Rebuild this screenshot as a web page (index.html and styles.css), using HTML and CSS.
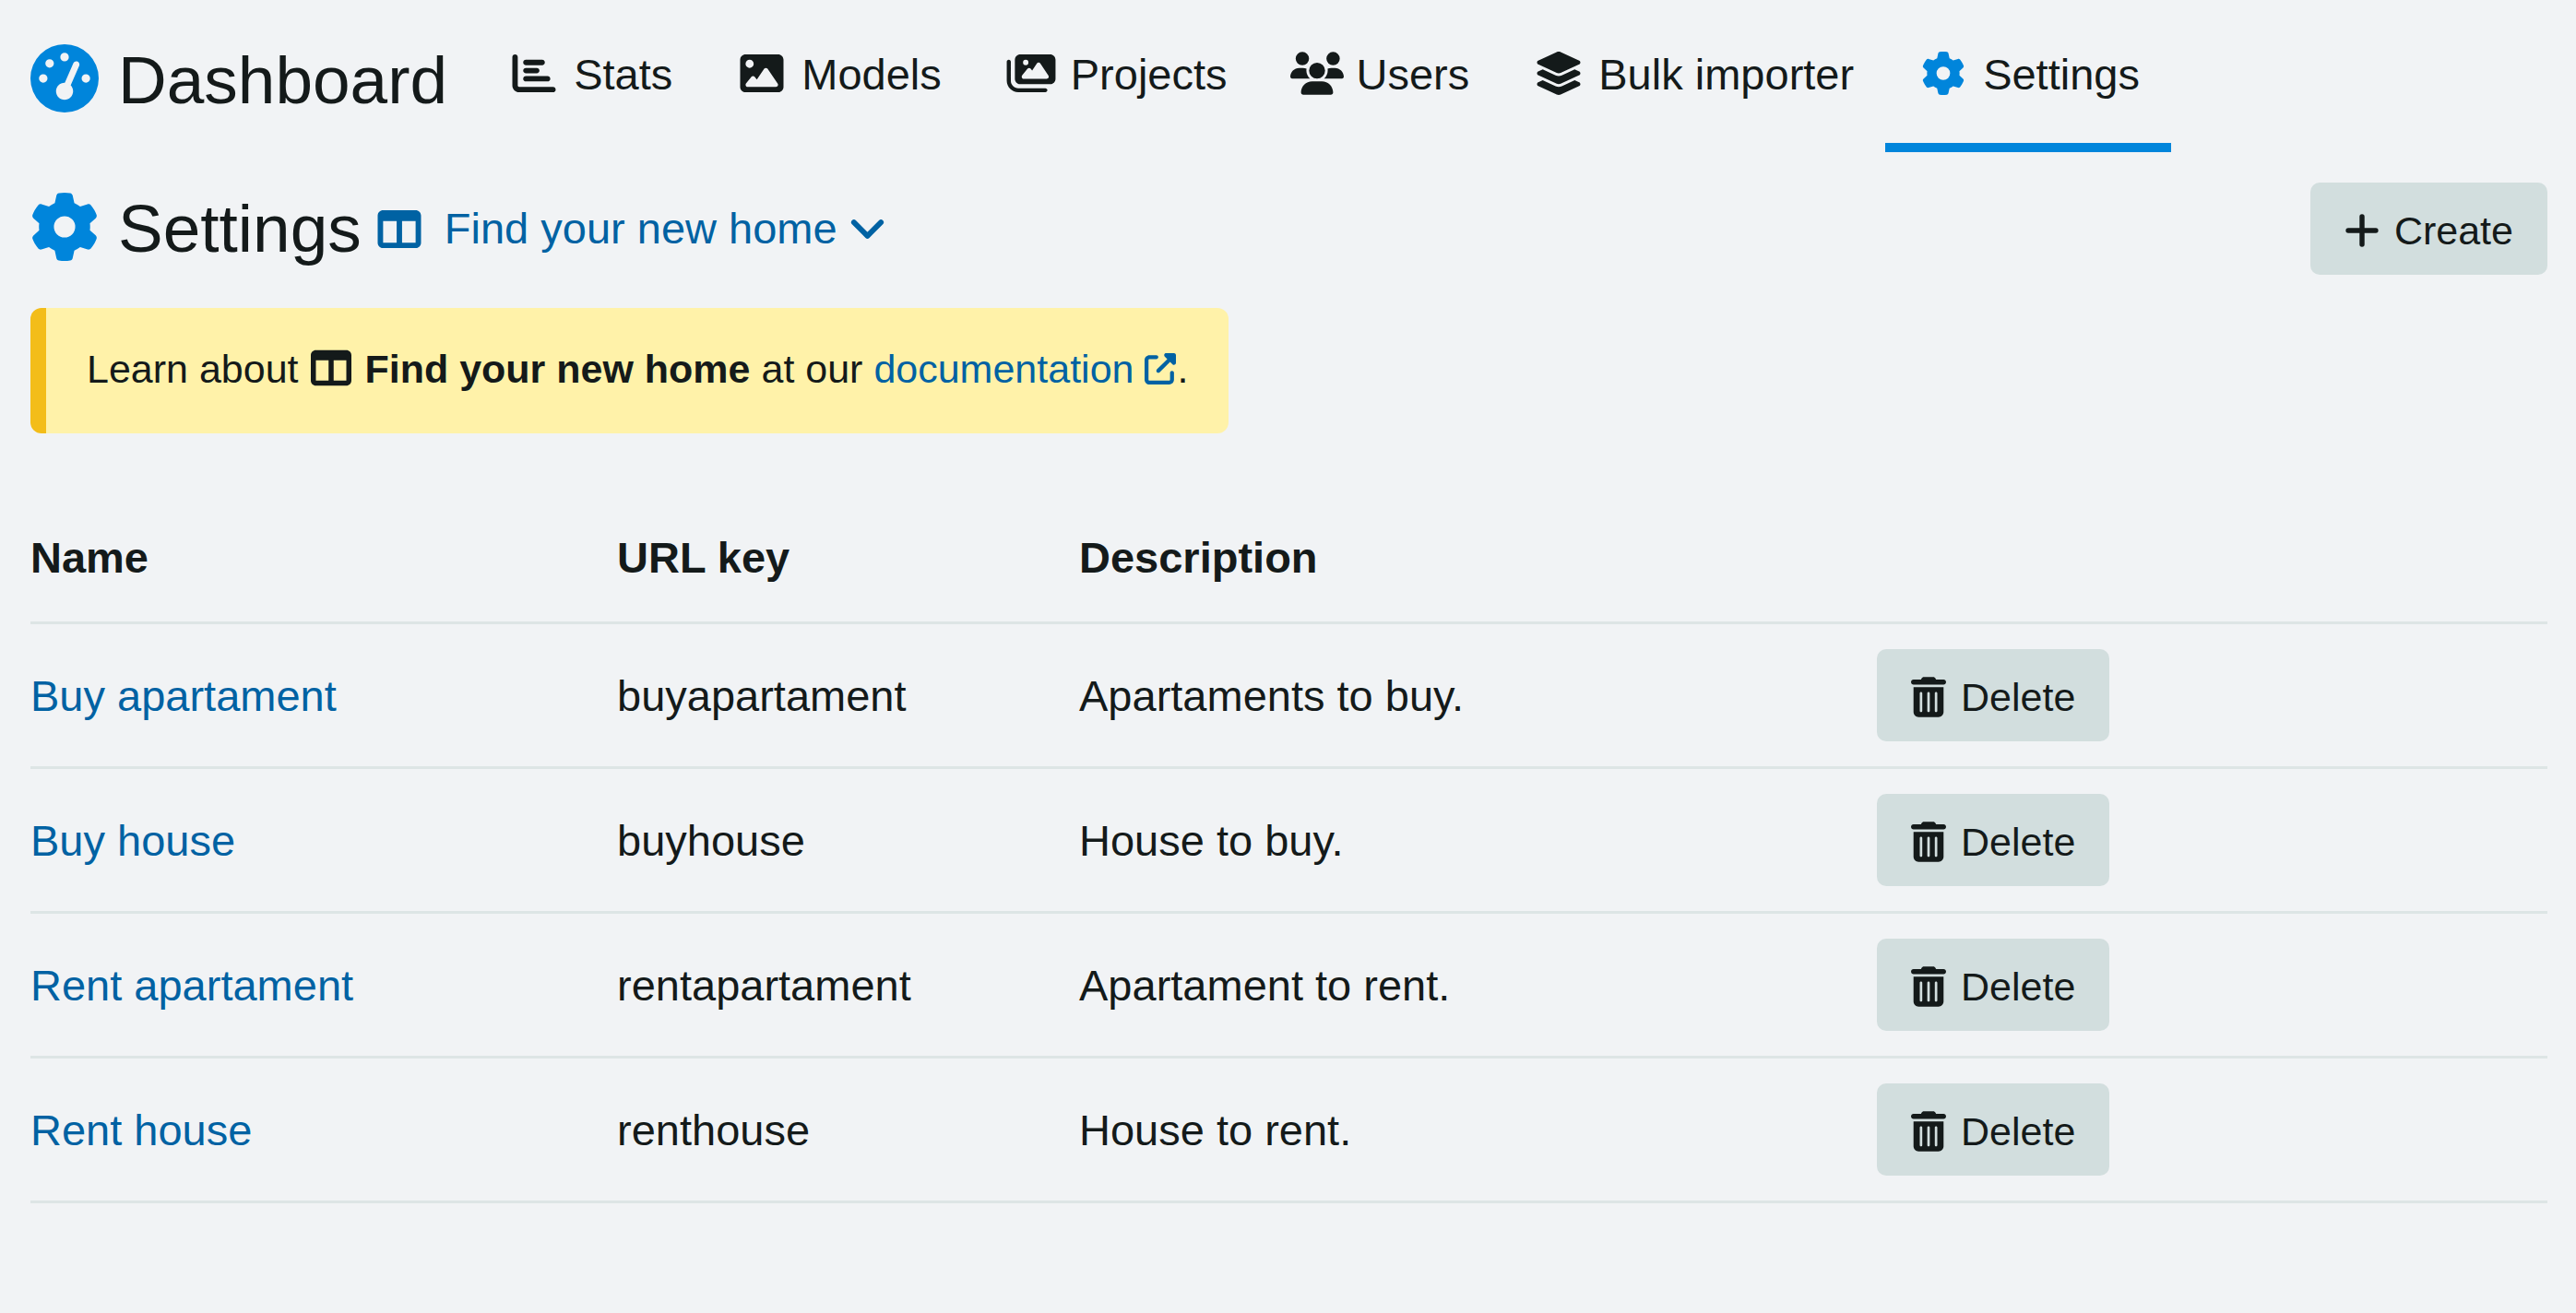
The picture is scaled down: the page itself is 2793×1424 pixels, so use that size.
FILE: index.html
```html
<!DOCTYPE html>
<html lang="en">
<head>
<meta charset="utf-8">
<title>Dashboard settings</title>
<meta name="viewport" content="width=device-width, initial-scale=1">
<link rel="stylesheet" href="styles.css">
</head>
<body>
<svg class="sprite" aria-hidden="true">
<symbol id="gauge" viewBox="0 0 512 512"><path d="M0 256a256 256 0 1 1 512 0A256 256 0 1 1 0 256zM288 96a32 32 0 1 0 -64 0 32 32 0 1 0 64 0zM256 416c35.3 0 64-28.7 64-64c0-17.4-6.9-33.1-18.1-44.6L366 161.7c5.3-12.1-.2-26.3-12.3-31.6s-26.3 .2-31.6 12.3L257.9 288c-.6 0-1.3 0-1.9 0c-35.3 0-64 28.7-64 64s28.7 64 64 64zM176 144a32 32 0 1 0 -64 0 32 32 0 1 0 64 0zM96 288a32 32 0 1 0 0-64 32 32 0 1 0 0 64zm352-32a32 32 0 1 0 -64 0 32 32 0 1 0 64 0z"/></symbol>
<symbol id="gear" viewBox="0 0 512 512"><path d="M495.9 166.6c3.2 8.7 .5 18.4-6.4 24.6l-43.3 39.4c1.1 8.3 1.7 16.8 1.7 25.4s-.6 17.1-1.7 25.4l43.3 39.4c6.9 6.2 9.6 15.9 6.4 24.6c-4.4 11.9-9.7 23.3-15.8 34.3l-4.7 8.1c-6.6 11-14 21.4-22.1 31.2c-5.9 7.2-15.7 9.6-24.5 6.8l-55.7-17.7c-13.4 10.3-28.2 18.9-44 25.4l-12.5 57.1c-2 9.1-9 16.3-18.2 17.8c-13.8 2.3-28 3.5-42.5 3.5s-28.7-1.2-42.5-3.5c-9.2-1.5-16.2-8.7-18.2-17.8l-12.5-57.1c-15.8-6.5-30.6-15.1-44-25.4L83.1 425.9c-8.8 2.8-18.6 .3-24.5-6.8c-8.1-9.8-15.5-20.2-22.1-31.2l-4.7-8.1c-6.1-11-11.4-22.4-15.8-34.3c-3.2-8.7-.5-18.4 6.4-24.6l43.3-39.4C64.6 273.1 64 264.6 64 256s.6-17.1 1.7-25.4L22.4 191.2c-6.9-6.2-9.6-15.9-6.4-24.6c4.4-11.9 9.7-23.3 15.8-34.3l4.7-8.1c6.6-11 14-21.4 22.1-31.2c5.9-7.2 15.7-9.6 24.5-6.8l55.7 17.7c13.4-10.3 28.2-18.9 44-25.4l12.5-57.1c2-9.1 9-16.3 18.2-17.8C227.3 1.2 241.5 0 256 0s28.7 1.2 42.5 3.5c9.2 1.5 16.2 8.7 18.2 17.8l12.5 57.1c15.8 6.5 30.6 15.1 44 25.4l55.7-17.7c8.8-2.8 18.6-.3 24.5 6.8c8.1 9.8 15.5 20.2 22.1 31.2l4.7 8.1c6.1 11 11.4 22.4 15.8 34.3zM256 336a80 80 0 1 0 0-160 80 80 0 1 0 0 160z"/></symbol>
<symbol id="chart" viewBox="0 0 512 512"><path d="M32 32c17.7 0 32 14.3 32 32V400c0 8.8 7.2 16 16 16H480c17.7 0 32 14.3 32 32s-14.3 32-32 32H80c-44.2 0-80-35.8-80-80V64C0 46.3 14.3 32 32 32zm96 96c0-17.7 14.3-32 32-32l192 0c17.7 0 32 14.3 32 32s-14.3 32-32 32l-192 0c-17.7 0-32-14.3-32-32zm32 64H288c17.7 0 32 14.3 32 32s-14.3 32-32 32H160c-17.7 0-32-14.3-32-32s14.3-32 32-32zm0 96H416c17.7 0 32 14.3 32 32s-14.3 32-32 32H160c-17.7 0-32-14.3-32-32s14.3-32 32-32z"/></symbol>
<symbol id="image" viewBox="0 0 512 512"><path d="M0 96C0 60.7 28.7 32 64 32H448c35.3 0 64 28.7 64 64V416c0 35.3-28.7 64-64 64H64c-35.3 0-64-28.7-64-64V96zM323.8 202.5c-4.5-6.6-11.9-10.5-19.8-10.5s-15.4 3.9-19.8 10.5l-87 127.6L170.7 297c-4.6-5.7-11.5-9-18.7-9s-14.2 3.3-18.7 9l-64 80c-5.8 7.2-6.9 17.1-2.9 25.4s12.4 13.6 21.6 13.6h96 32H424c8.9 0 17.1-4.9 21.2-12.8s3.6-17.4-1.4-24.7l-120-176zM112 192a48 48 0 1 0 0-96 48 48 0 1 0 0 96z"/></symbol>
<symbol id="images" viewBox="0 0 576 512"><path d="M160 32c-35.3 0-64 28.7-64 64V320c0 35.3 28.7 64 64 64H512c35.3 0 64-28.7 64-64V96c0-35.3-28.7-64-64-64H160zM396 138.7l96 144c4.9 7.4 5.4 16.8 1.2 24.6S480.9 320 472 320H328 280 200c-9.2 0-17.6-5.3-21.6-13.6s-2.9-18.2 2.9-25.4l64-80c4.6-5.7 11.4-9 18.7-9s14.2 3.3 18.7 9l17.3 21.6 56-84C360.5 132 368 128 376 128s15.5 4 20 10.7zM192 128a32 32 0 1 1 64 0 32 32 0 1 1 -64 0zM48 120c0-13.3-10.7-24-24-24S0 106.7 0 120V344c0 75.1 60.9 136 136 136H456c13.3 0 24-10.7 24-24s-10.7-24-24-24H136c-48.6 0-88-39.4-88-88V120z"/></symbol>
<symbol id="users" viewBox="0 0 640 512"><path d="M144 0a80 80 0 1 1 0 160A80 80 0 1 1 144 0zM512 0a80 80 0 1 1 0 160A80 80 0 1 1 512 0zM0 298.7C0 239.8 47.8 192 106.7 192h42.7c15.9 0 31 3.5 44.6 9.7c-1.3 7.2-1.9 14.7-1.9 22.3c0 38.2 16.8 72.5 43.3 96c-.2 0-.4 0-.7 0H21.3C9.6 320 0 310.4 0 298.7zM405.3 320c-.2 0-.4 0-.7 0c26.6-23.5 43.3-57.8 43.3-96c0-7.6-.7-15-1.9-22.3c13.6-6.3 28.7-9.7 44.6-9.7h42.7C592.2 192 640 239.8 640 298.7c0 11.8-9.6 21.3-21.3 21.3H405.3zM224 224a96 96 0 1 1 192 0 96 96 0 1 1 -192 0zM128 485.3C128 411.7 187.7 352 261.3 352H378.7C452.3 352 512 411.7 512 485.3c0 14.7-11.9 26.7-26.7 26.7H154.7c-14.7 0-26.7-11.9-26.7-26.7z"/></symbol>
<symbol id="layers" viewBox="0 0 576 512"><path d="M264.5 5.2c14.9-6.9 32.1-6.9 47 0l218.6 101c8.5 3.9 13.9 12.4 13.9 21.8s-5.4 17.9-13.9 21.8l-218.6 101c-14.9 6.9-32.1 6.9-47 0L45.9 149.8C37.4 145.8 32 137.3 32 128s5.4-17.9 13.9-21.8L264.5 5.2zM476.9 209.6l53.2 24.6c8.5 3.9 13.9 12.4 13.9 21.8s-5.4 17.9-13.9 21.8l-218.6 101c-14.9 6.9-32.1 6.9-47 0L45.9 277.8C37.4 273.8 32 265.3 32 256s5.4-17.9 13.9-21.8l53.2-24.6 152 70.2c23.4 10.8 50.4 10.8 73.8 0l152-70.2zm-152 198.2l152-70.2 53.2 24.6c8.5 3.9 13.9 12.4 13.9 21.8s-5.4 17.9-13.9 21.8l-218.6 101c-14.9 6.9-32.1 6.9-47 0L45.9 405.8C37.4 401.8 32 393.3 32 384s5.4-17.9 13.9-21.8l53.2-24.6 152 70.2c23.4 10.8 50.4 10.8 73.8 0z"/></symbol>
<symbol id="columns" viewBox="0 0 512 512"><path fill-rule="evenodd" d="M0 96C0 60.7 28.7 32 64 32H448c35.3 0 64 28.7 64 64V416c0 35.3-28.7 64-64 64H64c-35.3 0-64-28.7-64-64V96zM64 160V416H224V160zM288 160V416H448V160z"/></symbol>
<symbol id="chevron" viewBox="0 0 448 512"><path d="M64 176l160 160 160-160" fill="none" stroke="currentColor" stroke-width="64" stroke-linecap="round" stroke-linejoin="round"/></symbol>
<symbol id="plus" viewBox="0 0 448 512"><path d="M224 80v352M48 256h352" fill="none" stroke="currentColor" stroke-width="64" stroke-linecap="round"/></symbol>
<symbol id="external" viewBox="0 0 512 512"><path d="M352 0c-12.9 0-24.6 7.8-29.6 19.8s-2.2 25.7 6.9 34.9L370.7 96 201.4 265.4c-12.5 12.5-12.5 32.8 0 45.3s32.8 12.5 45.3 0L416 141.3l41.4 41.4c9.2 9.2 22.9 11.9 34.9 6.9s19.8-16.6 19.8-29.6V32c0-17.7-14.3-32-32-32H352zM80 32C35.8 32 0 67.8 0 112V432c0 44.2 35.8 80 80 80H400c44.2 0 80-35.8 80-80V320c0-17.7-14.3-32-32-32s-32 14.3-32 32V432c0 8.8-7.2 16-16 16H80c-8.8 0-16-7.2-16-16V112c0-8.8 7.2-16 16-16H192c17.7 0 32-14.3 32-32s-14.3-32-32-32H80z"/></symbol>
<symbol id="trash" viewBox="0 0 448 512"><path fill-rule="evenodd" d="M135.2 17.7C140.6 6.8 151.7 0 163.8 0H284.2c12.1 0 23.2 6.8 28.6 17.7L320 32h96c17.7 0 32 14.3 32 32s-14.3 32-32 32H32C14.3 96 0 81.7 0 64S14.3 32 32 32h96zM32 128H416V448c0 35.3-28.7 64-64 64H96c-35.3 0-64-28.7-64-64zm96 64c-8.8 0-16 7.2-16 16V432c0 8.8 7.2 16 16 16s16-7.2 16-16V208c0-8.8-7.2-16-16-16zm96 0c-8.8 0-16 7.2-16 16V432c0 8.8 7.2 16 16 16s16-7.2 16-16V208c0-8.8-7.2-16-16-16zm96 0c-8.8 0-16 7.2-16 16V432c0 8.8 7.2 16 16 16s16-7.2 16-16V208c0-8.8-7.2-16-16-16z"/></symbol>
</svg>

<header class="topbar">
  <h1 class="title"><svg class="icon icon-title"><use href="#gauge"/></svg>Dashboard</h1>
  <nav class="tabs" aria-label="Dashboard">
    <a class="tab" href="#stats"><svg class="icon icon-text"><use href="#chart"/></svg>Stats</a>
    <a class="tab" href="#models"><svg class="icon icon-text"><use href="#image"/></svg>Models</a>
    <a class="tab" href="#projects"><svg class="icon icon-text"><use href="#images"/></svg>Projects</a>
    <a class="tab" href="#users-list"><svg class="icon icon-text"><use href="#users"/></svg>Users</a>
    <a class="tab" href="#importer"><svg class="icon icon-text"><use href="#layers"/></svg>Bulk importer</a>
    <a class="tab tab-active" href="#settings" aria-current="page"><svg class="icon icon-text"><use href="#gear"/></svg>Settings</a>
  </nav>
</header>

<main>
  <div class="heading">
    <h2 class="title"><svg class="icon icon-title"><use href="#gear"/></svg>Settings</h2>
    <button class="picker" type="button"><svg class="icon icon-text"><use href="#columns"/></svg>Find your new home<svg class="icon icon-chevron"><use href="#chevron"/></svg></button>
    <button class="button create" type="button"><svg class="icon icon-button"><use href="#plus"/></svg>Create</button>
  </div>

  <p class="notice">Learn about <svg class="icon icon-notice"><use href="#columns"/></svg> <strong>Find your new home</strong> at our <a href="#documentation">documentation<svg class="icon icon-external"><use href="#external"/></svg></a>.</p>

  <table class="listing">
    <colgroup><col class="col-name"><col class="col-key"><col class="col-description"><col></colgroup>
    <thead>
      <tr><th scope="col">Name</th><th scope="col">URL key</th><th scope="col">Description</th><td></td></tr>
    </thead>
    <tbody>
      <tr><td><a href="#buyapartament">Buy apartament</a></td><td>buyapartament</td><td>Apartaments to buy.</td><td class="actions"><button class="button" type="button"><svg class="icon icon-button"><use href="#trash"/></svg>Delete</button></td></tr>
      <tr><td><a href="#buyhouse">Buy house</a></td><td>buyhouse</td><td>House to buy.</td><td class="actions"><button class="button" type="button"><svg class="icon icon-button"><use href="#trash"/></svg>Delete</button></td></tr>
      <tr><td><a href="#rentapartament">Rent apartament</a></td><td>rentapartament</td><td>Apartament to rent.</td><td class="actions"><button class="button" type="button"><svg class="icon icon-button"><use href="#trash"/></svg>Delete</button></td></tr>
      <tr><td><a href="#renthouse">Rent house</a></td><td>renthouse</td><td>House to rent.</td><td class="actions"><button class="button" type="button"><svg class="icon icon-button"><use href="#trash"/></svg>Delete</button></td></tr>
    </tbody>
  </table>
</main>
</body>
</html>
```
FILE: styles.css
```css
* { box-sizing: border-box; }

body {
  margin: 0;
  padding: 0 31px 0 33px;
  background: #f1f3f5;
  color: #141a1a;
  font: 47px/72px "Liberation Sans", Arial, sans-serif;
}

a { color: #0062a3; text-decoration: none; }
button { font: inherit; color: inherit; border: 0; cursor: pointer; }

.sprite { display: none; }
.icon { fill: currentColor; flex: none; overflow: visible; }
.icon-title { width: 74px; height: 74px; margin-bottom: 4px; color: #0085db; }
.icon-text { width: 58px; height: 47px; }
.icon-chevron { width: 41px; height: 47px; }
.icon-button { width: 38px; height: 44px; }
.icon-notice { width: 48px; height: 44px; vertical-align: -6px; }
.icon-external { width: 34px; height: 34px; margin: 0 1px 0 12px; vertical-align: -2px; }

.topbar { display: flex; height: 165px; }

.title {
  display: flex;
  align-items: center;
  gap: 21px;
  margin: 0;
  font-size: 73px;
  font-weight: 400;
  line-height: 100px;
}
.topbar .title { height: 174px; }

.tabs { display: flex; margin-left: 31px; }
.tab {
  display: flex;
  align-items: flex-start;
  gap: 14px;
  height: 165px;
  padding: 45px 34px 0;
  color: inherit;
}
.tab .icon { margin-top: 11px; }
.tab-active { border-bottom: 10px solid #0085db; }
.tab-active .icon { color: #0085db; }

.heading { display: flex; align-items: center; padding-top: 33px; }
.picker {
  display: flex;
  align-items: center;
  gap: 12px;
  padding: 0;
  margin-left: 12px;
  background: none;
  color: #0062a3;
}
.picker .icon-text { margin-right: 8px; }

.button {
  display: flex;
  align-items: center;
  gap: 16px;
  height: 100px;
  padding: 4px 37px 0;
  border-radius: 10px;
  background: #d2dede;
  font-size: 43px;
}
.create { margin-left: auto; }

.notice {
  width: fit-content;
  margin: 36px 0 0;
  padding: 30px 44px 34px;
  border-left: 17px solid #f3bd19;
  border-radius: 12px;
  background: #fff2a9;
  font-size: 43px;
}

.listing {
  width: 100%;
  margin-top: 66px;
  border-collapse: collapse;
  table-layout: fixed;
}
.listing tr { height: 157px; border-bottom: 3px solid #dde5e5; }
.listing thead tr { height: 139px; }
.listing th, .listing td { padding: 0; text-align: left; }
.listing tbody td { padding-top: 3px; }
.listing tbody .actions { padding-top: 0; }
.col-name { width: 636px; }
.col-key { width: 501px; }
.col-description { width: 865px; }
```
